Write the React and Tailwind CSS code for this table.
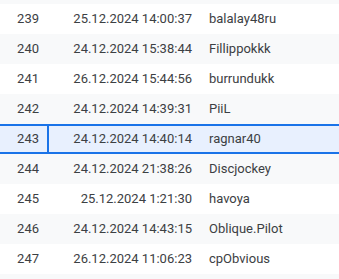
import { useState } from "react";

const rows = [
  { id: 239, date: "25.12.2024 14:00:37", name: "balalay48ru" },
  { id: 240, date: "24.12.2024 15:38:44", name: "Fillippokkk" },
  { id: 241, date: "26.12.2024 15:44:56", name: "burrundukk" },
  { id: 242, date: "24.12.2024 14:39:31", name: "PiiL" },
  { id: 243, date: "24.12.2024 14:40:14", name: "ragnar40" },
  { id: 244, date: "24.12.2024 21:38:26", name: "Discjockey" },
  { id: 245, date: "25.12.2024 1:21:30", name: "havoya" },
  { id: 246, date: "24.12.2024 14:43:15", name: "Oblique.Pilot" },
  { id: 247, date: "26.12.2024 11:06:23", name: "cpObvious" },
];

export default function App() {
  const [selected, setSelected] = useState(243);

  return (
    <div className="w-[339px] h-[279px] overflow-hidden bg-white font-['Roboto',sans-serif] text-[13px] text-[#3c4043]">
      {/* tail of the row scrolled above */}
      <div className="h-[4px] bg-[#f8f9fa]" />
      {rows.map((r) => {
        const active = r.id === selected;
        return (
          <div
            key={r.id}
            onClick={() => setSelected(r.id)}
            className={
              active
                ? "flex h-[30px] items-center bg-[#e8f0fe] border-y-2 border-[#1a73e8]"
                : r.id % 2 === 0
                ? "flex h-[30px] items-center bg-[#f8f9fa]"
                : "flex h-[30px] items-center bg-white"
            }
          >
            <div
              className={
                active
                  ? "w-[49px] h-full flex items-center justify-end pr-[8px] border-r-2 border-[#1a73e8]"
                  : "w-[49px] h-full flex items-center justify-end pr-[10px]"
              }
            >
              {r.id}
            </div>
            <div className="w-[151px] text-right pr-[8px]">{r.date}</div>
            <div className="flex-1 pl-[9px]">{r.name}</div>
          </div>
        );
      })}
      {/* next row, just peeking in */}
      <div className="h-[5px] bg-[#f8f9fa]" />
    </div>
  );
}
